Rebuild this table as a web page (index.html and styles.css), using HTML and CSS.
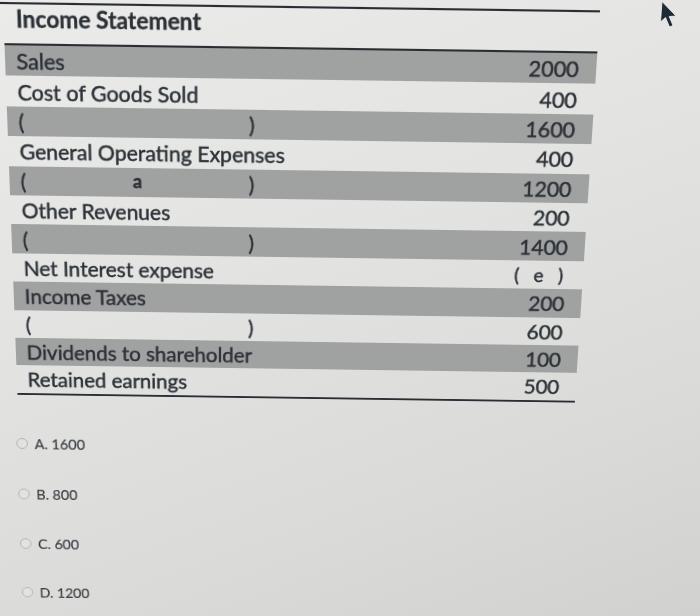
FILE: index.html
```html
<!DOCTYPE html>
<html lang="en">
<head>
<meta charset="utf-8">
<title>Income Statement</title>
<link rel="stylesheet" href="styles.css">
</head>
<body>
<div class="screen">
  <div class="sheet">
    <div class="topline"></div>
    <div class="title">Income Statement</div>
    <div class="table">
      <div class="row band"><span class="label">Sales</span><span class="num">2000</span></div>
      <div class="row"><span class="label">Cost of Goods Sold</span><span class="num">400</span></div>
      <div class="row band"><span class="label paren"><span>(</span><span>)</span></span><span class="num">1600</span></div>
      <div class="row"><span class="label">General Operating Expenses</span><span class="num">400</span></div>
      <div class="row band"><span class="label paren"><span>(</span><span class="mark">a</span><span>)</span></span><span class="num">1200</span></div>
      <div class="row"><span class="label">Other Revenues</span><span class="num">200</span></div>
      <div class="row band"><span class="label paren"><span>(</span><span>)</span></span><span class="num">1400</span></div>
      <div class="row"><span class="label">Net Interest expense</span><span class="num blank">(&nbsp;&nbsp;&nbsp;e&nbsp;&nbsp;&nbsp;)</span></div>
      <div class="row band"><span class="label">Income Taxes</span><span class="num">200</span></div>
      <div class="row"><span class="label paren"><span>(</span><span>)</span></span><span class="num">600</span></div>
      <div class="row band"><span class="label">Dividends to shareholder</span><span class="num">100</span></div>
      <div class="row"><span class="label">Retained earnings</span><span class="num">500</span></div>
    </div>
    <ul class="options">
      <li class="option"><span class="radio"></span><span class="opt-text">A. 1600</span></li>
      <li class="option"><span class="radio"></span><span class="opt-text">B. 800</span></li>
      <li class="option"><span class="radio"></span><span class="opt-text">C. 600</span></li>
      <li class="option"><span class="radio"></span><span class="opt-text">D. 1200</span></li>
    </ul>
  </div>
  <svg class="cursor" width="26" height="32" viewBox="0 0 26 32" aria-hidden="true">
    <path d="M7 1.5 L5.5 22 L10.5 17.5 L14.5 27 L18 25.5 L14.2 16.5 L21 16 Z" fill="#1f2a37" stroke="#f4f5f3" stroke-width="0.8" stroke-linejoin="round"/>
  </svg>
</div>
</body>
</html>
```
FILE: styles.css
```css
html, body {
  margin: 0;
  padding: 0;
}

body {
  width: 700px;
  height: 616px;
  overflow: hidden;
  font-family: "Lato", "Liberation Sans", sans-serif;
  color: #2b3036;
}

.screen {
  position: relative;
  width: 700px;
  height: 616px;
  overflow: hidden;
  background: linear-gradient(160deg, #ebecea 0%, #e3e4e2 40%, #dadbd9 75%, #d1d2d0 100%);
}

.sheet {
  width: 700px;
  padding-top: 11px;
  transform-origin: 300px 225px;
  transform: perspective(1000px) rotate(0.8deg) rotateX(-10deg);
}

.topline {
  height: 2px;
  width: 620px;
  margin-left: -34px;
  background: #2a2e33;
}

.title {
  height: 37px;
  line-height: 27px;
  padding-left: 23px;
  font-size: 22px;
  font-weight: 700;
  -webkit-text-stroke: 0.3px currentColor;
}

.table {
  margin-left: 11px;
  width: 575px;
  border-top: 2px solid #2a2e33;
  border-bottom: 2px solid #2a2e33;
}

.row {
  display: flex;
  align-items: center;
  justify-content: space-between;
  height: 29.4px;
  padding: 0 17px 0 11px;
  font-size: 21px;
  -webkit-text-stroke: 0.45px currentColor;
}

.row.band {
  background: #a0a1a1;
}

.label {
  white-space: nowrap;
}

.paren {
  display: flex;
  justify-content: space-between;
  width: 232px;
}

.mark {
  font-weight: 700;
  font-size: 18px;
}

.num {
  font-size: 21px;
  text-align: right;
}

.blank {
  font-size: 19px;
  margin-right: 3px;
}

.options {
  list-style: none;
  margin: 45px 0 0 0;
  padding: 0 0 0 8px;
  display: flex;
  flex-direction: column;
  gap: 40px;
}

.option {
  display: flex;
  align-items: center;
  gap: 7px;
  height: 16px;
  font-size: 15px;
  color: #3a3e42;
  -webkit-text-stroke: 0.2px currentColor;
}

.radio {
  width: 10px;
  height: 10px;
  border-radius: 50%;
  border: 1px solid #b1b2b0;
  background: #e2e3e1;
}

.cursor {
  position: absolute;
  left: 655px;
  top: 0;
}
```
